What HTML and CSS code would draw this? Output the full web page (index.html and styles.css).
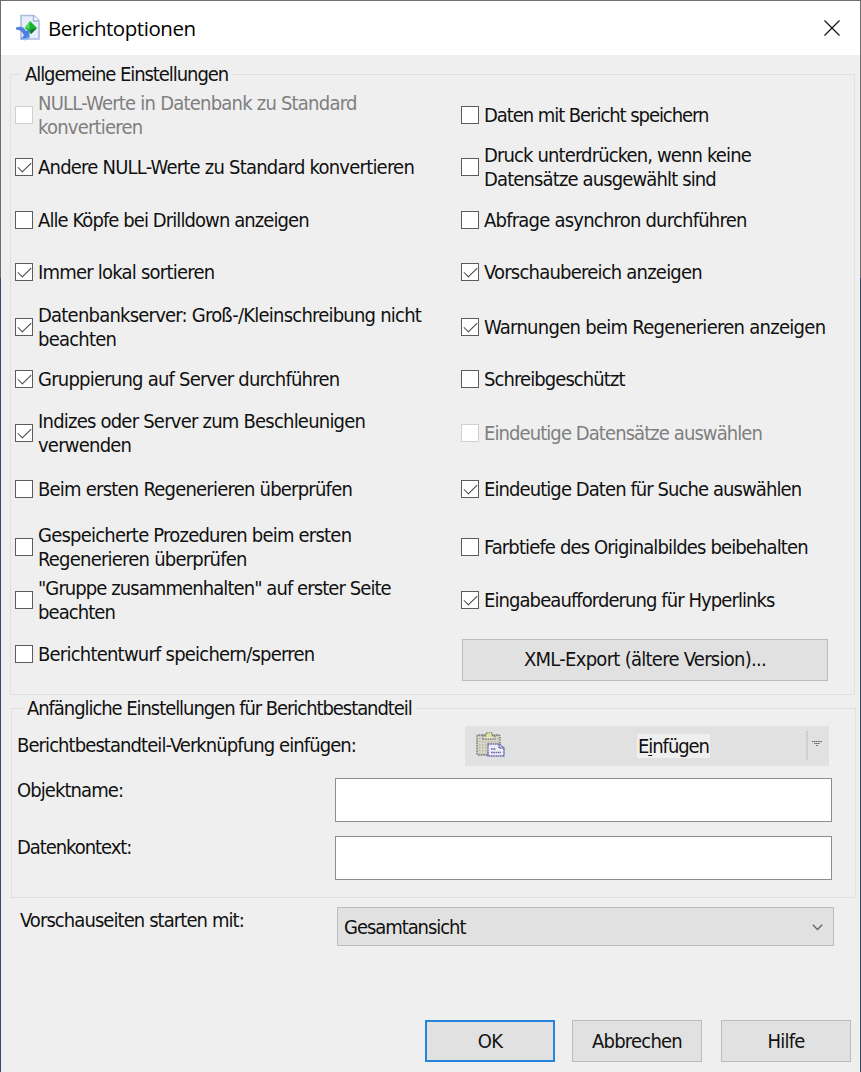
FILE: index.html
```html
<!DOCTYPE html>
<html lang="de">
<head>
<meta charset="utf-8">
<title>Berichtoptionen</title>
<link rel="stylesheet" href="styles.css">
</head>
<body>
<div class="window">
  <header class="titlebar">
    <svg class="app-icon" width="25" height="28" viewBox="0 0 25 28">
      <path d="M5 1.500h13l5 5V25H5z" fill="#e6eefb" stroke="#a9bddf" stroke-width="1.600"/>
      <path d="M17.500 1.500v5.500h5.500" fill="#fff" stroke="#9db4da" stroke-width="1.400"/>
      <path d="M14 7l7 7-6 6-6-6z" fill="#18b42a"/>
      <path d="M14 7l-5 6 4 2z" fill="#55dc5d"/>
      <path d="M21 14l-6 6-1-4z" fill="#176f2c"/>
      <path d="M0 13.500c5-1.500 8-.5 10 3.500l3.500-1.500v8.500c-3 3-6.500 2.500-9 1l3.500-3.500c-1.500-4-4-6-8-6z" fill="#4d83df"/>
      <path d="M6 24.500c2 1.500 5 1 7-1" fill="none" stroke="#a8c4f3" stroke-width="1.500"/>
    </svg>
    <h1 class="title">Berichtoptionen</h1>
    <svg class="close" width="16" height="16" viewBox="0 0 16 16"><path d="M.5.5l15 15M15.500.5l-15 15" stroke="#111" stroke-width="1.200"/></svg>
  </header>

  <section class="group general">
    <h2 class="legend">Allgemeine Einstellungen</h2>
    <div class="options">
      <label class="option off"><i class="box"></i><span>NULL-Werte in Datenbank zu Standard<br>konvertieren</span></label>
      <label class="option tighter"><i class="box"></i><span>Daten mit Bericht speichern</span></label>
      <label class="option"><i class="box on"></i><span>Andere NULL-Werte zu Standard konvertieren</span></label>
      <label class="option snug"><i class="box"></i><span>Druck unterdrücken, wenn keine<br>Datensätze ausgewählt sind</span></label>
      <label class="option tight"><i class="box"></i><span>Alle Köpfe bei Drilldown anzeigen</span></label>
      <label class="option"><i class="box"></i><span>Abfrage asynchron durchführen</span></label>
      <label class="option"><i class="box on"></i><span>Immer lokal sortieren</span></label>
      <label class="option"><i class="box on"></i><span>Vorschaubereich anzeigen</span></label>
      <label class="option"><i class="box on"></i><span>Datenbankserver: Groß-/Kleinschreibung nicht<br>beachten</span></label>
      <label class="option loose"><i class="box on"></i><span>Warnungen beim Regenerieren anzeigen</span></label>
      <label class="option"><i class="box on"></i><span>Gruppierung auf Server durchführen</span></label>
      <label class="option tight"><i class="box"></i><span>Schreibgeschützt</span></label>
      <label class="option"><i class="box on"></i><span>Indizes oder Server zum Beschleunigen<br>verwenden</span></label>
      <label class="option off tight"><i class="box"></i><span>Eindeutige Datensätze auswählen</span></label>
      <label class="option"><i class="box"></i><span>Beim ersten Regenerieren überprüfen</span></label>
      <label class="option tight"><i class="box on"></i><span>Eindeutige Daten für Suche auswählen</span></label>
      <label class="option"><i class="box"></i><span>Gespeicherte Prozeduren beim ersten<br>Regenerieren überprüfen</span></label>
      <label class="option snug"><i class="box"></i><span>Farbtiefe des Originalbildes beibehalten</span></label>
      <label class="option tight"><i class="box"></i><span>"Gruppe zusammenhalten" auf erster Seite<br>beachten</span></label>
      <label class="option tight"><i class="box on"></i><span>Eingabeaufforderung für Hyperlinks</span></label>
      <label class="option"><i class="box"></i><span>Berichtentwurf speichern/sperren</span></label>
      <div class="button xml loose"><span>XML-Export (ältere Version)...</span></div>
    </div>
  </section>

  <section class="group initial">
    <h2 class="legend">Anfängliche Einstellungen für Berichtbestandteil</h2>
    <div class="row paste-row">
      <span class="caption tight">Berichtbestandteil-Verknüpfung einfügen:</span>
      <div class="paste">
        <svg class="clip" width="30" height="26" viewBox="0 0 30 26">
          <defs><pattern id="dither" width="3" height="3" patternUnits="userSpaceOnUse"><rect width="3" height="3" fill="#d6d6cc"/><rect width="1.500" height="1.500" fill="#b9b993"/></pattern></defs>
          <rect x="1" y="3" width="23" height="20" rx="1.500" fill="url(#dither)" stroke="#77777b" stroke-width="1.500" stroke-dasharray="1.700 .8"/>
          <path d="M7 7V4h3V1h6v3h3v3z" fill="#e7e7d8" stroke="#85857f" stroke-width="1.300" stroke-dasharray="1.500 .8"/>
          <path d="M10 4h6M12 2h2" stroke="#e0df72" stroke-width="1.500"/>
          <path d="M12 12h11l5 4v8H12z" fill="#ececf5" stroke="#6968ad" stroke-width="1.500" stroke-dasharray="1.700 .6"/>
          <path d="M23 12v4h5M15 17h5M15 20.500h10" fill="none" stroke="#6968ad" stroke-width="1.300" stroke-dasharray="1.700 .6"/>
        </svg>
        <span class="paste-text tighter">E<u>i</u>nfügen</span>
        <i class="split"></i>
        <svg class="drop" width="10" height="6" viewBox="0 0 10 6"><path d="M0 .5h10M2 2.500h6M4 4.500h2" stroke="#666" stroke-width="1.200" stroke-dasharray="1.400 .4"/></svg>
      </div>
    </div>
    <div class="row field-row"><span class="caption tight">Objektname:</span><div class="input"></div></div>
    <div class="row field-row last"><span class="caption tighter">Datenkontext:</span><div class="input"></div></div>
  </section>

  <div class="start">
    <span class="caption tight">Vorschauseiten starten mit:</span>
    <div class="select tighter"><span>Gesamtansicht</span>
      <svg width="11" height="7" viewBox="0 0 11 7"><path d="M.8.8l4.700 4.700L10.200.8" fill="none" stroke="#666" stroke-width="1.400"/></svg>
    </div>
  </div>

  <footer class="actions">
    <div class="button primary"><span>OK</span></div>
    <div class="button"><span>Abbrechen</span></div>
    <div class="button"><span>Hilfe</span></div>
  </footer>
</div>
</body>
</html>
```
FILE: styles.css
```css
* { box-sizing: border-box; }
body {
  margin: 0;
  width: 861px;
  height: 1072px;
  overflow: hidden;
  padding: 1px 1px 0;
  background: linear-gradient(#6e6e6e 0 278px, #3b4a64 278px);
  color: #111;
  font: 20px/24.4px "DejaVu Sans Condensed", "DejaVu Sans", sans-serif;
  font-stretch: condensed;
  letter-spacing: -0.78px;
  white-space: nowrap;
}
.loose { letter-spacing: -0.72px; }
.snug { letter-spacing: -0.87px; }
.tight { letter-spacing: -0.92px; }
.tighter { letter-spacing: -1.06px; }

.window { height: 1071px; background: #efefef; display: flex; flex-direction: column; }
.titlebar { height: 54px; background: #fff; display: flex; align-items: center; padding: 0 20px 0 15px; flex: none; }
.title { flex: 1; margin: 0 0 0 7px; font: 20.5px/28px "Open Sans", "Noto Sans", sans-serif; letter-spacing: -0.45px; color: #000; }
.close { flex: none; }

.group { border: 1px solid #e0e0e0; flex: none; }
.general { margin: 19px 5px 0 9px; height: 621px; }
.initial { margin: 13px 4px 0 10px; height: 190px; }
.legend { margin: -13px 0 0 10px; padding: 0 4px; width: max-content; background: #efefef; font: inherit; height: 24px; letter-spacing: -1.06px; }
.initial .legend { margin-left: 11px; }

.options {
  display: grid;
  grid-template-columns: 446px 367px;
  grid-template-rows: 52px 52px 54px 50px 60px 44px 64px 48px 68px 38px 70px;
  padding-left: 4px;
  margin-top: 3px;
}
.option { display: flex; align-items: center; gap: 5px; }
.box { width: 18px; height: 18px; flex: none; border: 1px solid #5c5c5c; background: #fff; display: block; }
.box.on::after {
  content: "";
  display: block;
  width: 12px;
  height: 6px;
  margin: 3px 0 0 2px;
  border: solid #444;
  border-width: 0 0 1.5px 1.5px;
  transform: rotate(-45deg);
}
.off { color: #7f7f7f; }
.off .box { border-color: #d0d0d0; }

.button { height: 42px; border: 1px solid #bcbcbc; background: #e1e1e1; display: flex; align-items: center; justify-content: center; }
.xml { margin: 20px 0 0 1px; width: 366px; padding-bottom: 2px; }

.row { display: flex; justify-content: space-between; padding-left: 5px; }
.paste-row { height: 58px; padding-top: 6px; padding-right: 26px; }
.paste-row .caption { padding-top: 7px; }
.paste { width: 364px; height: 40px; background: #e1e1e1; display: flex; align-items: center; padding: 0 7px 0 11px; }
.clip { margin-top: -2px; }
.paste-text { margin-left: 131px; height: 24px; line-height: 25px; background: #efefef; padding: 0 1px; }
.paste-text u { text-decoration-thickness: 1px; text-underline-offset: 2px; }
.split { margin-left: auto; width: 2px; height: 30px; background: repeating-linear-gradient(#c6c6c6 0 1px, #d8d8d8 1px 2px); }
.drop { margin: -4px 0 0 4px; }
.field-row { height: 58px; padding-right: 23px; }
.field-row.last .caption { margin-top: -1px; }
.input { width: 497px; height: 44px; background: #fff; border: 1px solid #8d8d8d; }

.start { display: flex; justify-content: space-between; margin: 9px 26px 0 19px; }
.start .caption { padding-top: 1px; }
.select { width: 497px; height: 39px; border: 1px solid #bcbcbc; background: #e1e1e1; display: flex; align-items: center; justify-content: space-between; padding: 2px 10px 0 6px; }
.actions { display: flex; justify-content: flex-end; margin: 74px 9px 0 0; }
.actions .button { width: 130px; margin-left: 19px; }
.actions .button.primary { border: 2px solid #2385dc; margin-right: -2px; }
```
